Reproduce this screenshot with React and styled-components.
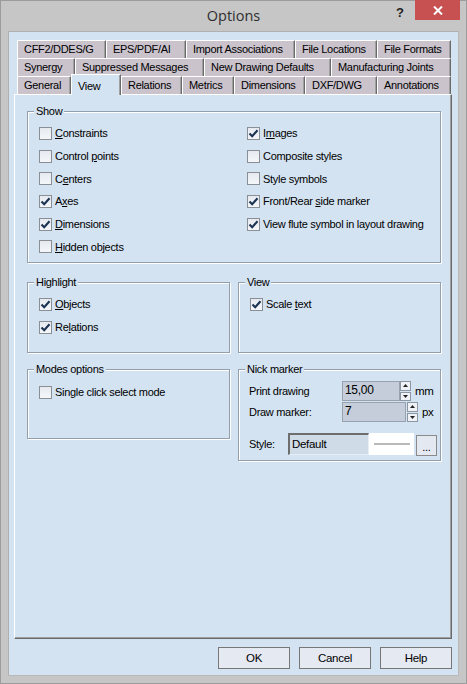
import React from "react";
import styled, { createGlobalStyle } from "styled-components";

const Global = createGlobalStyle`
  html, body { margin: 0; padding: 0; background: #c6c6c6; }
  body { font-family: "Liberation Sans", Arial, sans-serif; font-size: 11px; color: #000; }
  * { box-sizing: border-box; }
`;

const Window = styled.div`
  width: 467px;
  height: 684px;
  background: #c6c6c6;
  border: 1px solid #9c9c9c;
  display: flex;
  flex-direction: column;
`;

const TitleBar = styled.div`
  height: 30px;
  display: flex;
  align-items: flex-start;
  position: relative;
`;

const Title = styled.div`
  position: absolute;
  left: 0;
  right: 0;
  top: 5px;
  text-align: center;
  font-family: "Open Sans", "Noto Sans", sans-serif;
  font-size: 14.5px;
  color: #2e2e2e;
  pointer-events: none;
`;

const TitleButtons = styled.div`
  margin-left: auto;
  display: flex;
  align-items: flex-start;
`;

const HelpGlyph = styled.div`
  width: 30px;
  height: 20px;
  font-family: "Liberation Sans", Arial, sans-serif;
  font-weight: bold;
  font-size: 13px;
  color: #222;
  display: flex;
  align-items: center;
  justify-content: center;
  padding-top: 2px;
`;

const CloseBtn = styled.div`
  width: 45px;
  height: 20px;
  background: #c75050;
  display: flex;
  align-items: center;
  justify-content: center;
  margin-right: 6px;
  margin-top: -1px;
`;

const Client = styled.div`
  margin: 0 7px;
  height: 645px;
  background: #d4e3f1;
  border-left: 1px solid #b0b0b0;
  border-top: 1px solid #b0b0b0;
  border-right: 1px solid #b8b8b8;
  border-bottom: 1px solid #b8b8b8;
  padding: 8px 6px 0 5px;
  display: flex;
  flex-direction: column;
  letter-spacing: -0.3px;
`;

const TabRows = styled.div`
  display: flex;
  flex-direction: column;
  padding: 0 0 0 3px;
`;

const TabRow = styled.div`
  display: flex;
  height: 18px;
`;

const Tab = styled.div`
  position: relative;
  flex: 0 0 auto;
  height: ${(p) => (p.$active ? "21px" : "18px")};
  margin-top: ${(p) => (p.$active ? "-2px" : "0")};
  margin-bottom: ${(p) => (p.$active ? "-1px" : "0")};
  z-index: ${(p) => (p.$active ? 2 : 0)};
  background: ${(p) => (p.$active ? "#d4e3f1" : "#cac3cc")};
  border-top: 1px solid #fff;
  border-left: 1px solid #fff;
  border-right: 1px solid #6a6a6a;
  box-shadow: inset -1px 0 0 #a0a0a0;
  padding-left: 6px;
  padding-top: ${(p) => (p.$active ? "4px" : "1px")};
  line-height: 14px;
  white-space: nowrap;
  overflow: hidden;
`;

const Panel = styled.div`
  height: 545px;
  width: 438px;
  border-top: 1px solid #fff;
  border-left: 1px solid #fff;
  border-right: 1px solid #696969;
  border-bottom: 1px solid #696969;
  box-shadow: inset -1px -1px 0 #a0a0a0;
  padding: 16px 0 0 12px;
  display: flex;
  flex-direction: column;
`;

const Group = styled.div`
  position: relative;
  width: ${(p) => p.$w}px;
  height: ${(p) => p.$h}px;
  border: 1px solid #939fac;
  box-shadow: inset 1px 1px 0 #fff, 1px 1px 0 #fff;
  padding: ${(p) => p.$pt ?? 10}px 0 0 ${(p) => p.$pl ?? 11}px;
`;

const Legend = styled.span`
  position: absolute;
  top: -8px;
  left: 6px;
  padding: 0 2px;
  background: #d4e3f1;
  line-height: 14px;
`;

const ShowGrid = styled.div`
  display: grid;
  grid-template-columns: 208px 1fr;
`;

const Col = styled.div`
  display: flex;
  flex-direction: column;
`;

const Columns = styled.div`
  display: flex;
  gap: 8px;
  margin-top: 19px;
`;

const Stack = styled.div`
  display: flex;
  flex-direction: column;
  gap: 16px;
`;

const CheckRow = styled.div`
  height: 22.7px;
  display: flex;
  align-items: center;
  gap: 3px;
  white-space: nowrap;
`;

const Box = styled.span`
  width: 13px;
  height: 13px;
  flex: 0 0 13px;
  border: 1px solid #8a8f96;
  background: linear-gradient(#e6eaf0, #f4f6f9);
  display: inline-flex;
  align-items: center;
  justify-content: center;
`;

const Key = styled.span`
  text-decoration: underline;
  text-underline-offset: 1px;
`;

const NickBody = styled.div`
  display: grid;
  grid-template-columns: 93px auto;
  row-gap: 1px;
  align-items: center;
`;

const FieldLabel = styled.span`
  white-space: nowrap;
`;

const SpinWrap = styled.div`
  display: flex;
  align-items: center;
`;

const Input = styled.div`
  width: ${(p) => p.$w}px;
  height: 20px;
  background: #c4cdd9;
  border: 1px solid #98a2ae;
  padding: 1px 0 0 2px;
  font-size: 12px;
  line-height: 14px;
`;

const Spinner = styled.div`
  width: 11px;
  height: 20px;
  display: flex;
  flex-direction: column;
  gap: 1px;
  margin-left: ${(p) => p.$ml ?? 0}px;
`;

const SpinBtn = styled.div`
  flex: 1;
  background: #eef1f6;
  border: 1px solid #8d97a3;
  display: flex;
  align-items: center;
  justify-content: center;
`;

const Unit = styled.span`
  margin-left: 4px;
  font-size: 11.5px;
`;

const StyleRow = styled.div`
  display: flex;
  align-items: flex-start;
  margin-top: 11px;
`;

const StyleLabel = styled.span`
  width: 39px;
  line-height: 22px;
`;

const Combo = styled.div`
  width: 81px;
  height: 22px;
  background: #cfdbe7;
  border-top: 2px solid #6e6e6e;
  border-left: 2px solid #6e6e6e;
  border-right: 1px solid #e8eef5;
  border-bottom: 1px solid #e8eef5;
  padding: 2px 0 0 2px;
  font-size: 11.5px;
  line-height: 14px;
`;

const Preview = styled.div`
  width: 45px;
  height: 22px;
  background: #fff;
  display: flex;
  align-items: center;
  justify-content: center;
`;

const PreviewLine = styled.div`
  width: 36px;
  height: 2px;
  background: #b9b9b9;
`;

const DotsBtn = styled.div`
  width: 21px;
  height: 21px;
  margin-left: 2px;
  margin-top: 2px;
  background: #e3e8f1;
  border: 1px solid #8a8a8a;
  display: flex;
  align-items: flex-end;
  justify-content: center;
  padding-bottom: 3px;
  line-height: 10px;
`;

const ButtonBar = styled.div`
  display: flex;
  justify-content: flex-end;
  gap: 9px;
  margin-top: 8px;
  width: 438px;
`;

const Button = styled.div`
  width: 72px;
  height: 22px;
  background: #e4e9f2;
  border: 1px solid #777;
  display: flex;
  align-items: center;
  justify-content: center;
  font-size: 11.5px;
`;

const Check = ({ checked }) => (
  <Box>
    {checked && (
      <svg width="11" height="11" viewBox="0 0 11 11">
        <path d="M1.5 5.5 L4.2 8.3 L9.5 2.2" fill="none" stroke="#1c3352" strokeWidth="2.1" />
      </svg>
    )}
  </Box>
);

const CheckItem = ({ checked, children }) => (
  <CheckRow>
    <Check checked={checked} />
    <span>{children}</span>
  </CheckRow>
);

const Arrow = ({ up }) => (
  <svg width="5" height="3" viewBox="0 0 5 3">
    <path d={up ? "M0 3 L2.5 0 L5 3 Z" : "M0 0 L2.5 3 L5 0 Z"} fill="#222" />
  </svg>
);

const SpinBox = ({ w, value, unit, ml }) => (
  <SpinWrap>
    <Input $w={w}>{value}</Input>
    <Spinner $ml={ml}>
      <SpinBtn><Arrow up /></SpinBtn>
      <SpinBtn><Arrow /></SpinBtn>
    </Spinner>
    <Unit>{unit}</Unit>
  </SpinWrap>
);

const tabRows = [
  [["CFF2/DDES/G", 89], ["EPS/PDF/AI", 80], ["Import Associations", 109], ["File Locations", 82], ["File Formats", 74]],
  [["Synergy", 58], ["Suppressed Messages", 129], ["New Drawing Defaults", 127], ["Manufacturing Joints", 120]],
  [["General", 54], ["View", 50], ["Relations", 61], ["Metrics", 52], ["Dimensions", 71], ["DXF/DWG", 72], ["Annotations", 74]],
];

export default function App() {
  return (
    <>
      <Global />
      <Window>
        <TitleBar>
          <Title>Options</Title>
          <TitleButtons>
            <HelpGlyph>?</HelpGlyph>
            <CloseBtn>
              <svg width="10" height="9" viewBox="0 0 10 9">
                <path d="M1 0.5 L9 8.5 M9 0.5 L1 8.5" stroke="#fff" strokeWidth="2" />
              </svg>
            </CloseBtn>
          </TitleButtons>
        </TitleBar>
        <Client>
          <TabRows>
            {tabRows.map((row, i) => (
              <TabRow key={i}>
                {row.map(([label, w]) => (
                  <Tab key={label} $active={label === "View"} style={{ width: w }}>
                    {label}
                  </Tab>
                ))}
              </TabRow>
            ))}
          </TabRows>
          <Panel>
            <Group $w={414} $h={152}>
              <Legend>Show</Legend>
              <ShowGrid>
                <Col>
                  <CheckItem><Key>C</Key>onstraints</CheckItem>
                  <CheckItem>Control <Key>p</Key>oints</CheckItem>
                  <CheckItem>C<Key>e</Key>nters</CheckItem>
                  <CheckItem checked>A<Key>x</Key>es</CheckItem>
                  <CheckItem checked><Key>D</Key>imensions</CheckItem>
                  <CheckItem><Key>H</Key>idden objects</CheckItem>
                </Col>
                <Col>
                  <CheckItem checked>I<Key>m</Key>ages</CheckItem>
                  <CheckItem>Composite styles</CheckItem>
                  <CheckItem>Style symbols</CheckItem>
                  <CheckItem checked>Front/Rear <Key>s</Key>ide marker</CheckItem>
                  <CheckItem checked>View flute symbol in layout drawing</CheckItem>
                </Col>
              </ShowGrid>
            </Group>
            <Columns>
              <Stack>
                <Group $w={203} $h={71}>
                  <Legend>Highlight</Legend>
                  <CheckItem checked><Key>O</Key>bjects</CheckItem>
                  <CheckItem checked>Re<Key>l</Key>ations</CheckItem>
                </Group>
                <Group $w={203} $h={70} $pt={11}>
                  <Legend>Modes options</Legend>
                  <CheckItem>Single click select mode</CheckItem>
                </Group>
              </Stack>
              <Stack>
                <Group $w={203} $h={71}>
                  <Legend>View</Legend>
                  <CheckItem checked>Scale <Key>t</Key>ext</CheckItem>
                </Group>
                <Group $w={203} $h={92} $pt={11} $pl={10}>
                  <Legend>Nick marker</Legend>
                  <NickBody>
                    <FieldLabel>Print drawing</FieldLabel>
                    <SpinBox w={58} value="15,00" unit="mm" />
                    <FieldLabel>Draw marker:</FieldLabel>
                    <SpinBox w={64} value="7" unit="px" ml={1} />
                  </NickBody>
                  <StyleRow>
                    <StyleLabel>Style:</StyleLabel>
                    <Combo>Default</Combo>
                    <Preview><PreviewLine /></Preview>
                    <DotsBtn>...</DotsBtn>
                  </StyleRow>
                </Group>
              </Stack>
            </Columns>
          </Panel>
          <ButtonBar>
            <Button>OK</Button>
            <Button>Cancel</Button>
            <Button>Help</Button>
          </ButtonBar>
        </Client>
      </Window>
    </>
  );
}
